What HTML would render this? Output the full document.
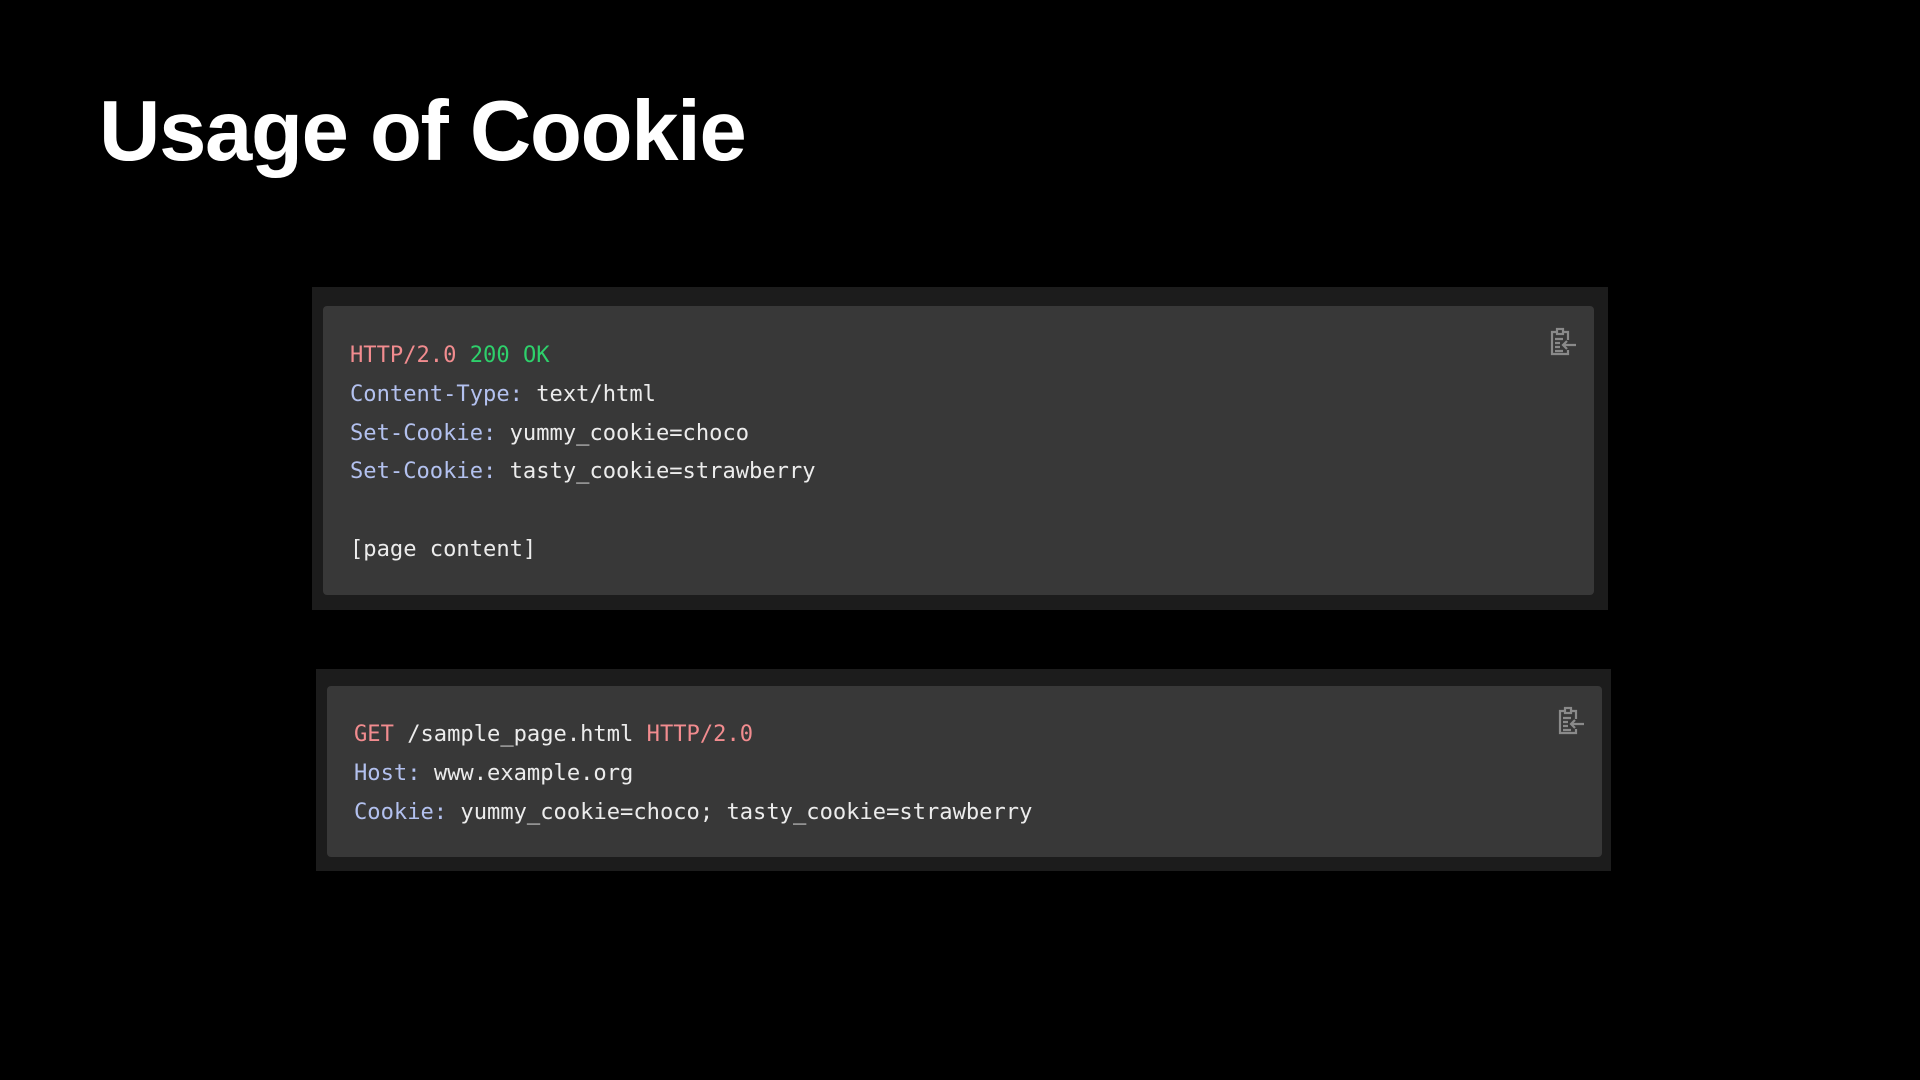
<!DOCTYPE html>
<html><head><meta charset="utf-8"><style>
html,body{margin:0;padding:0;background:#000;width:1920px;height:1080px;overflow:hidden}
h1{position:absolute;left:99px;margin:0;font:bold 85px/1 "Liberation Sans",sans-serif;color:#fff;letter-spacing:-1.3px;top:89px}
.outer{position:absolute;background:#1c1c1c}
.inner{position:absolute;background:#383838;border-radius:4px}
pre{position:absolute;margin:0;font:22.1px/38.8px "DejaVu Sans Mono","Liberation Mono",monospace;color:#ececec}
.r{color:#f28c8f}.g{color:#2ed06b}.b{color:#b3c1ef}
.ic{position:absolute}
</style></head><body>
<h1>Usage of Cookie</h1>
<div class="outer" style="left:312px;top:287px;width:1296px;height:323px"></div>
<div class="inner" style="left:323px;top:306px;width:1271px;height:289px"></div>
<pre style="left:350px;top:336px"><span class="r">HTTP/2.0</span> <span class="g">200 OK</span>
<span class="b">Content-Type:</span> text/html
<span class="b">Set-Cookie:</span> yummy_cookie=choco
<span class="b">Set-Cookie:</span> tasty_cookie=strawberry

[page content]</pre>
<div class="outer" style="left:316px;top:669px;width:1295px;height:202px"></div>
<div class="inner" style="left:327px;top:686px;width:1275px;height:171px"></div>
<pre style="left:354px;top:715px"><span class="r">GET</span> /sample_page.html <span class="r">HTTP/2.0</span>
<span class="b">Host:</span> www.example.org
<span class="b">Cookie:</span> yummy_cookie=choco; tasty_cookie=strawberry</pre>
<svg class="ic" style="left:1546px;top:326px" width="32" height="32" viewBox="0 0 32 32" fill="none" stroke="#8a8a8a" stroke-width="2.2">
<path d="M11 6H6v22h16v-4M22 14V6h-5"/><rect x="11" y="3" width="6" height="5"/><path d="M9 13h8M9 17h5M9 21h5M9 25h8M30 19H17M21 15l-4 4 4 4"/></svg>
<svg class="ic" style="left:1554px;top:705px" width="32" height="32" viewBox="0 0 32 32" fill="none" stroke="#8a8a8a" stroke-width="2.2">
<path d="M11 6H6v22h16v-4M22 14V6h-5"/><rect x="11" y="3" width="6" height="5"/><path d="M9 13h8M9 17h5M9 21h5M9 25h8M30 19H17M21 15l-4 4 4 4"/></svg>
</body></html>
